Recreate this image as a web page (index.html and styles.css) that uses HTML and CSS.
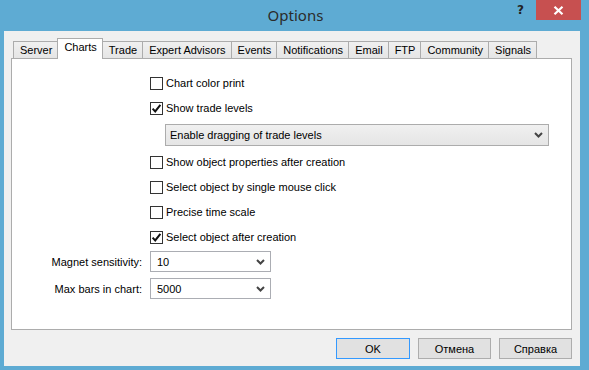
FILE: index.html
```html
<!DOCTYPE html>
<html>
<head>
<meta charset="utf-8">
<link rel="stylesheet" href="styles.css">
</head>
<body>
<div class="window">
  <div class="titlebar">
    <div class="title-side"></div>
    <div class="title">Options</div>
    <div class="title-side controls">
      <span class="help">?</span>
      <span class="close">
        <svg width="11" height="9" viewBox="0 0 11 9"><path d="M1.5 0.8 L9.5 8.2 M9.5 0.8 L1.5 8.2" stroke="#fff" stroke-width="2.2" fill="none"/></svg>
      </span>
    </div>
  </div>
  <div class="client">
    <div class="tabs">
      <div class="tab">Server</div>
      <div class="tab active">Charts</div>
      <div class="tab">Trade</div>
      <div class="tab">Expert Advisors</div>
      <div class="tab">Events</div>
      <div class="tab">Notifications</div>
      <div class="tab">Email</div>
      <div class="tab">FTP</div>
      <div class="tab">Community</div>
      <div class="tab">Signals</div>
    </div>
    <div class="panel">
      <div class="checks">
        <div class="check"><span class="box"></span><span>Chart color print</span></div>
        <div class="check"><span class="box"><svg width="11" height="11" viewBox="0 0 11 11"><path d="M1.6 5.6 L4.2 8.4 L9.4 1.8" stroke="#111" stroke-width="2" fill="none"/></svg></span><span>Show trade levels</span></div>
        <div class="select wide"><span>Enable dragging of trade levels</span><svg class="chev" width="9" height="6" viewBox="0 0 9 6"><path d="M1 1 L4.5 4.5 L8 1" stroke="#444" stroke-width="2" fill="none"/></svg></div>
        <div class="check gap-top"><span class="box"></span><span>Show object properties after creation</span></div>
        <div class="check"><span class="box"></span><span>Select object by single mouse click</span></div>
        <div class="check"><span class="box"></span><span>Precise time scale</span></div>
        <div class="check"><span class="box"><svg width="11" height="11" viewBox="0 0 11 11"><path d="M1.6 5.6 L4.2 8.4 L9.4 1.8" stroke="#111" stroke-width="2" fill="none"/></svg></span><span>Select object after creation</span></div>
      </div>
      <div class="fields">
        <label class="field-label">Magnet sensitivity:</label>
        <div class="combo"><span>10</span><svg class="chev" width="9" height="6" viewBox="0 0 9 6"><path d="M1 1 L4.5 4.5 L8 1" stroke="#444" stroke-width="2" fill="none"/></svg></div>
        <label class="field-label">Max bars in chart:</label>
        <div class="combo"><span>5000</span><svg class="chev" width="9" height="6" viewBox="0 0 9 6"><path d="M1 1 L4.5 4.5 L8 1" stroke="#444" stroke-width="2" fill="none"/></svg></div>
      </div>
    </div>
    <div class="buttons">
      <div class="btn default">OK</div>
      <div class="btn">Отмена</div>
      <div class="btn">Справка</div>
    </div>
  </div>
</div>
</body>
</html>
```
FILE: styles.css
```css
* { box-sizing: border-box; }
html, body { margin: 0; padding: 0; }
body {
  width: 589px;
  height: 370px;
  overflow: hidden;
  font-family: "Liberation Sans", Arial, sans-serif;
  font-size: 11px;
  color: #000;
}
.window {
  width: 589px;
  height: 370px;
  background: #5eabd3;
  display: flex;
  flex-direction: column;
}
.titlebar {
  height: 31px;
  display: grid;
  grid-template-columns: 1fr auto 1fr;
  align-items: start;
}
.title {
  font-family: "Noto Sans", "Open Sans", sans-serif;
  font-size: 15px;
  color: #2b2b2b;
  padding-top: 5px;
  padding-left: 2px;
}
.controls {
  display: flex;
  justify-content: flex-end;
  align-items: flex-start;
  padding-right: 8px;
}
.help {
  font-family: "DejaVu Sans", sans-serif;
  font-weight: bold;
  font-size: 12px;
  color: #222;
  margin-right: 12px;
  margin-top: 3px;
}
.close {
  width: 45px;
  height: 20px;
  background: #c75050;
  display: flex;
  align-items: center;
  justify-content: center;
}
.client {
  flex: 1;
  margin: 0 9px 4px 4px;
  background: #f0f0f0;
  display: flex;
  flex-direction: column;
  padding: 7px 8px 7px 7px;
}
.tabs {
  height: 20px;
  display: flex;
  align-items: flex-end;
  padding-left: 2px;
  position: relative;
  z-index: 1;
}
.tab {
  height: 17px;
  padding: 0 5px 0 6px;
  border: 1px solid #acacac;
  border-bottom: none;
  margin-right: -1px;
  background: linear-gradient(#f0f0f0, #e5e5e5);
  color: #000;
  line-height: 16px;
  white-space: nowrap;
}
.tab.active {
  height: 21px;
  margin-bottom: -1px;
  background: #fff;
  line-height: 17px;
  position: relative;
  z-index: 2;
}
.panel {
  flex: 1;
  background: #fff;
  border: 1px solid #acacac;
  padding-top: 18px;
}
.checks {
  margin-left: 138px;
  display: flex;
  flex-direction: column;
  gap: 12px;
}
.check {
  height: 13px;
  display: flex;
  align-items: center;
  gap: 3px;
  line-height: 13px;
}
.box {
  width: 13px;
  height: 13px;
  border: 1px solid #333;
  background: #fff;
  display: flex;
  align-items: center;
  justify-content: center;
  flex: none;
}
.select {
  height: 22px;
  border: 1px solid #acacac;
  background: linear-gradient(#f0f0f0, #e5e5e5);
  display: flex;
  align-items: center;
  justify-content: space-between;
  padding: 0 5px 0 4px;
}
.select.wide {
  margin-left: 15px;
  width: 384px;
  margin-top: -3px;
  margin-bottom: -2px;
}
.fields {
  margin-top: 7px;
  display: grid;
  grid-template-columns: 130px 121px;
  column-gap: 8px;
  row-gap: 6px;
  align-items: center;
}
.field-label {
  text-align: right;
}
.combo {
  height: 21px;
  border: 1px solid #abadb3;
  background: #fff;
  display: flex;
  align-items: center;
  justify-content: space-between;
  padding: 0 5px 0 6px;
}
.buttons {
  margin-top: 8px;
  height: 21px;
  display: flex;
  justify-content: flex-end;
  gap: 8px;
}
.btn {
  width: 73px;
  height: 21px;
  border: 1px solid #adadad;
  background: #e1e1e1;
  display: flex;
  align-items: center;
  justify-content: center;
}
.btn.default {
  border-color: #3399ff;
  width: 74px;
}
```
